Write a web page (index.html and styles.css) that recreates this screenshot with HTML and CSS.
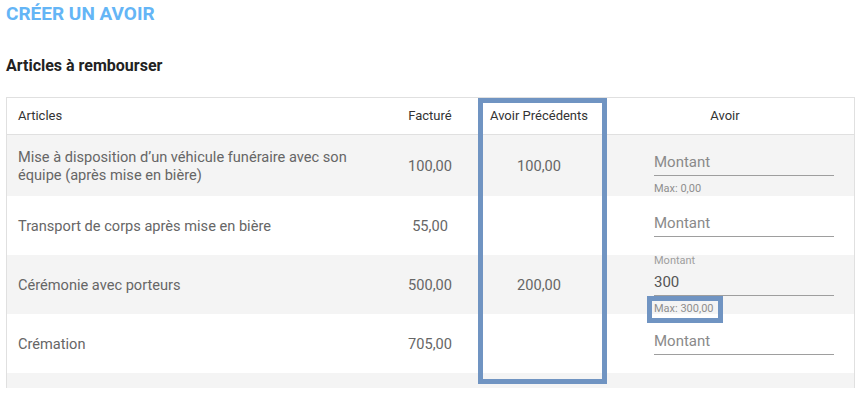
FILE: index.html
```html
<!DOCTYPE html>
<html lang="fr">
<head>
<meta charset="utf-8">
<title>Créer un avoir</title>
<link rel="stylesheet" href="styles.css">
</head>
<body>
<div class="page">
  <h1 class="title">CRÉER UN AVOIR</h1>
  <h2 class="subtitle">Articles à rembourser</h2>
  <div class="table">
    <div class="row head">
      <div class="cell c-name">Articles</div>
      <div class="cell c-num">Facturé</div>
      <div class="cell c-prev">Avoir Précédents</div>
      <div class="cell c-avoir-head">Avoir</div>
    </div>
    <div class="row shade first">
      <div class="cell c-name">Mise à disposition d’un véhicule funéraire avec son équipe (après mise en bière)</div>
      <div class="cell c-num">100,00</div>
      <div class="cell c-prev">100,00</div>
      <div class="cell c-avoir">
        <div class="field">
          <span class="label"></span>
          <div class="input placeholder">Montant</div>
          <span class="max">Max: 0,00</span>
        </div>
      </div>
    </div>
    <div class="row">
      <div class="cell c-name">Transport de corps après mise en bière</div>
      <div class="cell c-num">55,00</div>
      <div class="cell c-prev"></div>
      <div class="cell c-avoir">
        <div class="field">
          <span class="label"></span>
          <div class="input placeholder">Montant</div>
        </div>
      </div>
    </div>
    <div class="row shade">
      <div class="cell c-name">Cérémonie avec porteurs</div>
      <div class="cell c-num">500,00</div>
      <div class="cell c-prev">200,00</div>
      <div class="cell c-avoir">
        <div class="field">
          <span class="label">Montant</span>
          <div class="input">300</div>
          <span class="max">Max: 300,00</span>
        </div>
      </div>
    </div>
    <div class="row">
      <div class="cell c-name">Crémation</div>
      <div class="cell c-num">705,00</div>
      <div class="cell c-prev"></div>
      <div class="cell c-avoir">
        <div class="field">
          <span class="label"></span>
          <div class="input placeholder">Montant</div>
        </div>
      </div>
    </div>
    <div class="row shade tail"></div>
    <div class="mark mark-col"></div>
    <div class="mark mark-max"></div>
  </div>
</div>
</body>
</html>
```
FILE: styles.css
```css
* { box-sizing: border-box; }
html, body { margin: 0; padding: 0; background: #fff; }
body { font-family: Roboto, "Noto Sans", Arial, sans-serif; }
.page { padding: 3px 7px 0 6px; }
.title {
  margin: 0;
  font-size: 19px;
  line-height: 22px;
  font-weight: 700;
  color: #64b5f6;
}
.subtitle {
  margin: 31px 0 0;
  font-size: 16px;
  line-height: 19px;
  font-weight: 700;
  color: #222;
}
.table {
  position: relative;
  margin-top: 22px;
  width: 849px;
  border: 1px solid #e0e0e0;
  border-bottom: none;
}
.row {
  display: grid;
  grid-template-columns: 393px 60px 158px 236px;
  height: 59px;
  align-items: center;
  font-size: 14.6px;
  color: #666;
}
.row.first { height: 61px; }
.row.shade { background: #f4f4f4; }
.row.tail { height: 15px; }
.row.head {
  height: 37px;
  border-bottom: 1px solid #e0e0e0;
  font-size: 13px;
  color: #333;
}
.cell { line-height: 18px; }
.c-name { padding: 0 40px 0 11px; }
.c-num { text-align: center; }
.c-prev { text-align: center; }
.c-avoir-head { text-align: center; padding-right: 22px; }
.c-avoir { align-self: start; padding: 0 20px 0 36px; }
.field { display: flex; flex-direction: column; }
.label {
  height: 12px;
  font-size: 11px;
  line-height: 12px;
  color: #9e9e9e;
}
.input {
  height: 29px;
  padding-top: 6px;
  font-size: 15px;
  line-height: 18px;
  color: #555;
  border-bottom: 1px solid #9e9e9e;
}
.input.placeholder { color: #8a8a8a; }
.max {
  margin-top: 7px;
  font-size: 11px;
  line-height: 12px;
  color: #8e8e8e;
}
.mark {
  position: absolute;
  border: 5px solid #7094c2;
  pointer-events: none;
}
.mark-col { left: 471px; top: 0; width: 129px; height: 286px; }
.mark-max { left: 640px; top: 198px; width: 76px; height: 27px; }
```
